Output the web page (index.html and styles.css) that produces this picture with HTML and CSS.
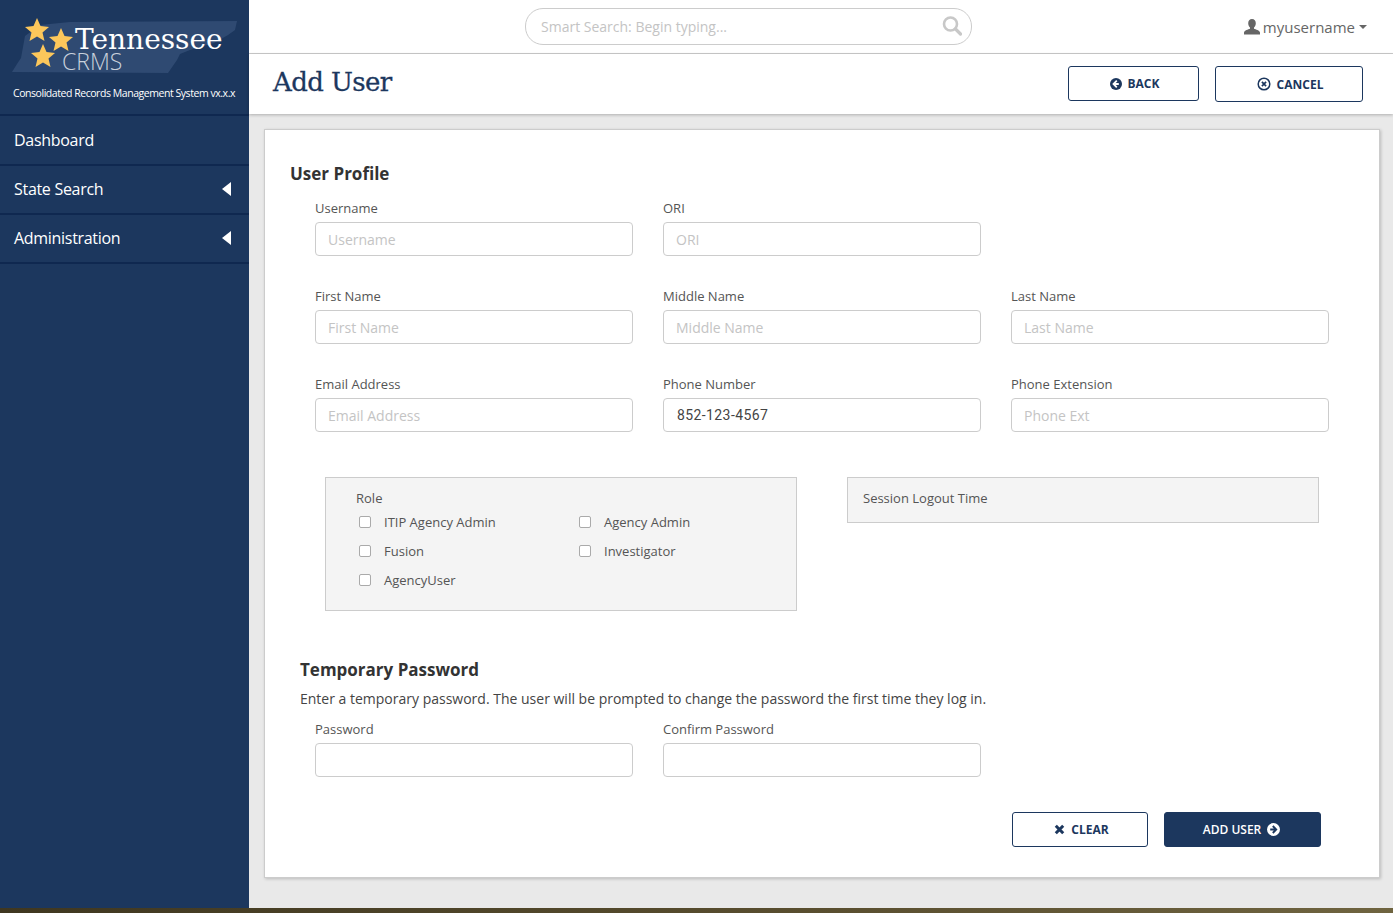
FILE: index.html
```html
<!DOCTYPE html>
<html>
<head>
    <title>Add User</title>
    <link rel="stylesheet" href="styles.css">
</head>
<body>

<div class="app">
    <aside class="sidebar">
        <div class="brand">
            <svg class="logo" width="249" height="82" viewBox="0 0 249 82">
                <polygon class="state" points="70,22 237,21 235,30 228,35 214,43 190,50 180,54 177,60 168,73 12,72 17,64 21,58 25,36 40,25"/>
                <polygon class="star" points="37,18 40.5,26 49,27 42.5,32.5 44.500,41 37,36.500 29.500,41 31.500,32.500 25,27 33.500,26"/>
                <polygon class="star" points="61,28 64.500,36 73,37 66.500,42.500 68.500,51 61,46.500 53.500,51 55.500,42.500 49,37 57.500,36"/>
                <polygon class="star" points="43,44 46.500,52 55,53 48.500,58.500 50.500,67 43,62.500 35.500,67 37.500,58.500 31,53 39.500,52"/>
                <text class="logo-name" x="75" y="49">Tennessee</text>
                <text class="logo-crms" x="62" y="70">CRMS</text>
            </svg>
            <div class="brand-sub">Consolidated Records Management System vx.x.x</div>
        </div>
        <nav class="nav">
            <a class="nav-item">Dashboard</a>
            <a class="nav-item">State Search <span class="nav-arrow"></span></a>
            <a class="nav-item">Administration <span class="nav-arrow"></span></a>
        </nav>
    </aside>

    <div class="main">
        <header class="topbar">
            <div class="search">
                <span>Smart Search: Begin typing...</span>
                <svg width="20" height="20" viewBox="0 0 20 20"><circle cx="8.500" cy="8" r="6.500" fill="none" stroke="#c8c8c8" stroke-width="2.600"/><path d="M13.500 13l5 5" stroke="#c8c8c8" stroke-width="3.200" stroke-linecap="round"/></svg>
            </div>
            <div class="user">
                <svg width="16" height="16" viewBox="0 0 16 16"><path fill="#666" d="M8 0c2.400 0 3.800 1.800 3.800 4.200 0 1.800-.8 3.400-1.800 4.300v1.300c1.800.7 5.500 1.500 6 3.700V15.500H0v-2c.5-2.200 4.200-3 6-3.700V8.500C5 7.600 4.200 6 4.200 4.200 4.200 1.800 5.600 0 8 0z"/></svg>
                <span>myusername</span>
                <span class="caret"></span>
            </div>
        </header>

        <div class="titlebar">
            <h1>Add User</h1>
            <div class="title-actions">
                <button class="btn btn-back">
                    <svg width="12" height="12" viewBox="0 0 12 12"><circle cx="6" cy="6" r="6" fill="#1c375e"/><path d="M6.800 2.700L3.500 6l3.300 3.300M3.800 6h5" fill="none" stroke="#fff" stroke-width="1.800"/></svg>
                    BACK
                </button>
                <button class="btn btn-cancel">
                    <svg width="14" height="14" viewBox="0 0 14 14"><circle cx="7" cy="7" r="5.800" fill="none" stroke="#1c375e" stroke-width="1.500"/><path d="M4.900 4.900l4.200 4.200M9.100 4.900l-4.200 4.200" stroke="#1c375e" stroke-width="1.700"/></svg>
                    CANCEL
                </button>
            </div>
        </div>

        <div class="content">
            <form class="card">
                <h2 class="profile-title">User Profile</h2>
                <div class="fields">
                    <div class="field"><label>Username</label><input placeholder="Username"></div>
                    <div class="field"><label>ORI</label><input placeholder="ORI"></div>
                    <div class="field"></div>
                    <div class="field"><label>First Name</label><input placeholder="First Name"></div>
                    <div class="field"><label>Middle Name</label><input placeholder="Middle Name"></div>
                    <div class="field"><label>Last Name</label><input placeholder="Last Name"></div>
                    <div class="field"><label>Email Address</label><input placeholder="Email Address"></div>
                    <div class="field"><label>Phone Number</label><input class="filled" value="852-123-4567"></div>
                    <div class="field"><label>Phone Extension</label><input placeholder="Phone Ext"></div>
                </div>

                <div class="boxes">
                    <div class="box role-box">
                        <div class="box-title">Role</div>
                        <div class="roles">
                            <label class="role"><input type="checkbox">ITIP Agency Admin</label>
                            <label class="role"><input type="checkbox">Agency Admin</label>
                            <label class="role"><input type="checkbox">Fusion</label>
                            <label class="role"><input type="checkbox">Investigator</label>
                            <label class="role"><input type="checkbox">AgencyUser</label>
                        </div>
                    </div>
                    <div class="box session-box">Session Logout Time</div>
                </div>

                <h2 class="temp-title">Temporary Password</h2>
                <p class="temp-note">Enter a temporary password. The user will be prompted to change the password the first time they log in.</p>
                <div class="fields">
                    <div class="field"><label>Password</label><input type="password"></div>
                    <div class="field"><label>Confirm Password</label><input type="password"></div>
                </div>

                <div class="form-actions">
                    <button type="button" class="btn btn-clear">
                        <svg width="11" height="11" viewBox="0 0 11 11"><path d="M1.800 1.800l7.400 7.400M9.200 1.800l-7.400 7.400" stroke="#1c375e" stroke-width="3"/></svg>
                        CLEAR
                    </button>
                    <button type="button" class="btn btn-add">
                        ADD USER
                        <svg width="13" height="13" viewBox="0 0 13 13"><circle cx="6.500" cy="6.500" r="6.500" fill="#fff"/><path d="M5.800 3l3.400 3.500-3.400 3.500M9 6.500H3.200" fill="none" stroke="#1c375e" stroke-width="1.900"/></svg>
                    </button>
                </div>
            </form>
        </div>
    </div>
</div>
<div class="desktop-strip"></div>

</body>
</html>
```

FILE: styles.css
```css
* {
    box-sizing: border-box;
}
body {
    margin: 0;
    height: 913px;
    overflow: hidden;
    font-family: "Open Sans", Arial, sans-serif;
    font-size: 14px;
    color: #555;
    background-color: #e9e9e9;
}
.app {
    display: flex;
    height: 908px;
}
.desktop-strip {
    height: 5px;
    background: linear-gradient(90deg, #3f3720, #5a4f30 60%, #6f6440);
}

/* sidebar */
.sidebar {
    width: 249px;
    flex: none;
    background-color: #1c375e;
    color: #fff;
}
.brand {
    height: 114px;
}
.logo {
    display: block;
}
.state {
    fill: #2f4a72;
}
.star {
    fill: #fcc75b;
}
.logo-name {
    font-family: "DejaVu Serif", serif;
    font-size: 28px;
    fill: #fff;
}
.logo-crms {
    font-family: "Open Sans", sans-serif;
    font-size: 23px;
    font-weight: 300;
    fill: #c9d1dc;
}
.brand-sub {
    margin: 4px 0 0 13px;
    font-size: 10.500px;
    letter-spacing: -0.450px;
    white-space: nowrap;
}
.nav-item {
    display: flex;
    justify-content: space-between;
    align-items: center;
    height: 49px;
    padding: 0 18px 2px 14px;
    border-top: 2px solid #0f2850;
    font-size: 16px;
    letter-spacing: -0.300px;
}
.nav-item:first-child {
    height: 50px;
    padding-bottom: 0;
}
.nav-item:last-child {
    height: 51px;
    border-bottom: 2px solid #0f2850;
}
.nav-arrow {
    width: 0;
    height: 0;
    border-top: 7px solid transparent;
    border-bottom: 7px solid transparent;
    border-right: 9px solid #fff;
}

/* top */
.main {
    flex: 1;
    display: flex;
    flex-direction: column;
    min-width: 0;
}
.topbar {
    display: flex;
    align-items: center;
    height: 54px;
    flex: none;
    background-color: #fff;
    border-bottom: 1px solid #ccc;
    padding: 0 26px 0 276px;
}
.search {
    display: flex;
    justify-content: space-between;
    align-items: center;
    width: 447px;
    height: 37px;
    margin-top: -1px;
    padding: 0 9px 0 15px;
    border: 1px solid #ccc;
    border-radius: 18px;
    color: #c4c4c4;
    font-size: 14px;
}
.user {
    display: flex;
    align-items: center;
    margin-left: auto;
    gap: 3px;
    font-size: 15px;
    color: #666;
}
.caret {
    margin-left: 1px;
    border-top: 4px solid #666;
    border-left: 4px solid transparent;
    border-right: 4px solid transparent;
}
.titlebar {
    display: flex;
    justify-content: space-between;
    align-items: center;
    height: 60px;
    flex: none;
    padding: 0 30px 0 24px;
    background-color: #fff;
    box-shadow: 0 1px 3px rgba(0, 0, 0, 0.25);
}
.titlebar h1 {
    margin: 0 0 4px;
    font-family: "DejaVu Serif", serif;
    font-size: 26px;
    font-weight: 400;
    letter-spacing: -0.600px;
    -webkit-text-stroke: 0.300px #1c375e;
    color: #1c375e;
}
.title-actions {
    display: flex;
    gap: 16px;
}
.btn {
    display: flex;
    justify-content: center;
    align-items: center;
    gap: 6px;
    height: 35px;
    padding: 0;
    border: 1px solid #1c375e;
    border-radius: 3px;
    background-color: #fff;
    color: #1c375e;
    font-family: "Open Sans", Arial, sans-serif;
    font-size: 12px;
    font-weight: 700;
}
.btn-back {
    width: 131px;
    padding-left: 2px;
}
.btn-cancel {
    width: 148px;
    height: 36px;
    padding-left: 2px;
}

/* form */
.content {
    flex: 1;
    padding: 15px 13px 30px 15px;
}
.card {
    height: 749px;
    padding: 33px 25px 0 25px;
    background-color: #fff;
    border: 1px solid #ccc;
    box-shadow: 1px 1px 3px rgba(0, 0, 0, 0.2);
}
h2 {
    margin: 0;
    font-size: 17px;
    font-weight: 700;
    color: #333;
    line-height: 22px;
}
.fields {
    display: grid;
    grid-template-columns: repeat(3, 318px);
    column-gap: 30px;
    padding-left: 25px;
}
.profile-title + .fields {
    margin-top: 13px;
}
.field {
    height: 88px;
}
.field label {
    display: block;
    height: 20px;
    margin-bottom: 4px;
    font-size: 13px;
    line-height: 20px;
    color: #555;
}
.field input {
    display: block;
    width: 100%;
    height: 34px;
    padding: 0 12px;
    border: 1px solid #ccc;
    border-radius: 4px;
    font-family: "Open Sans", Arial, sans-serif;
    font-size: 14px;
    outline: none;
}
.field input::placeholder {
    color: #c4c4c4;
    opacity: 1;
}
.field input.filled {
    padding-left: 13px;
    font-family: Roboto, Arial, sans-serif;
    color: #444;
    letter-spacing: 0.400px;
}
.boxes {
    display: flex;
    gap: 50px;
    align-items: flex-start;
    margin: 15px 0 0 35px;
}
.box {
    width: 472px;
    background-color: #f4f4f4;
    border: 1px solid #ccc;
    font-size: 13px;
}
.role-box {
    height: 134px;
    padding: 10px 30px 0;
}
.session-box {
    height: 46px;
    padding: 11px 15px;
}
.box-title {
    line-height: 20px;
}
.roles {
    display: grid;
    grid-template-columns: 220px 1fr;
    grid-auto-rows: 29px;
    margin-top: -1px;
}
.role {
    display: flex;
    align-items: center;
    gap: 13px;
    height: 29px;
    padding-left: 3px;
}
.role input {
    width: 12px;
    height: 12px;
    margin: 0;
    appearance: none;
    background-color: #fff;
    border: 1px solid #aaa;
    border-radius: 2px;
}
.temp-title {
    margin: 48px 0 0 10px;
}
.temp-note {
    margin: 8px 0 10px 10px;
    font-size: 14px;
    line-height: 20px;
    color: #444;
}
.form-actions {
    display: flex;
    justify-content: flex-end;
    gap: 16px;
    margin: 5px 33px 0 0;
}
.form-actions .btn {
    height: 35px;
}
.btn-clear {
    width: 136px;
    padding-left: 3px;
}
.btn-add {
    width: 157px;
    padding-right: 2px;
    background-color: #1c375e;
    color: #fff;
    font-weight: 600;
}
```
